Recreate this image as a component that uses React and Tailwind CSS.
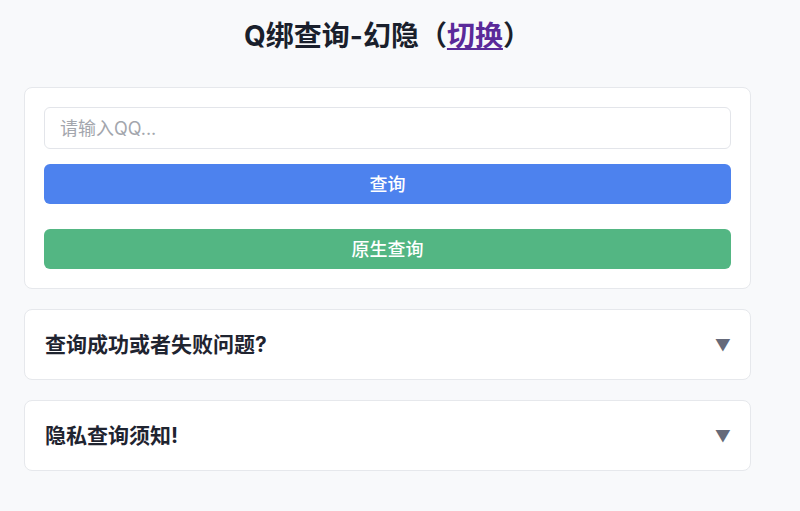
import React from 'react';

const font = { fontFamily: '"Inter", "Noto Sans CJK SC", sans-serif' };

const FaqCard = ({ title }) => (
  <div className="mt-5 flex h-[71px] items-center justify-between rounded-lg border border-[#e6e8ec] bg-white px-5">
    <span className="text-[21px] font-bold text-[#1f2430]">{title}</span>
    <span className="-mr-px text-[16px] leading-none text-[#656a7a]">▼</span>
  </div>
);

const App = () => {
  return (
    <div className="min-h-[511px] bg-[#f8f9fb]" style={font}>
      <div className="w-[775px] px-6 pt-[18px]">
        <h1 className="mb-[33px] text-center text-[28px] font-bold leading-[36px] text-[#1a1f2c]">
          Q绑查询-幻隐（<a href="#" className="text-[#5a2a9a] underline">切换</a>）
        </h1>

        <div className="rounded-lg border border-[#e6e8ec] bg-white p-[19px]">
          <input
            type="text"
            placeholder="请输入QQ..."
            className="block h-[42px] w-full rounded-md border border-[#e3e5ea] px-[15px] text-[18px] text-[#1f2430] outline-none placeholder:text-[#a3a6ad]"
          />
          <button className="mt-[15px] block h-10 w-full rounded-md bg-[#4d82ee] text-[18px] font-medium text-white">
            查询
          </button>
          <button className="mt-[25px] block h-10 w-full rounded-md bg-[#53b683] text-[18px] font-medium text-white">
            原生查询
          </button>
        </div>

        <FaqCard title="查询成功或者失败问题?" />
        <FaqCard title="隐私查询须知!" />
      </div>
    </div>
  );
};

export default App;
